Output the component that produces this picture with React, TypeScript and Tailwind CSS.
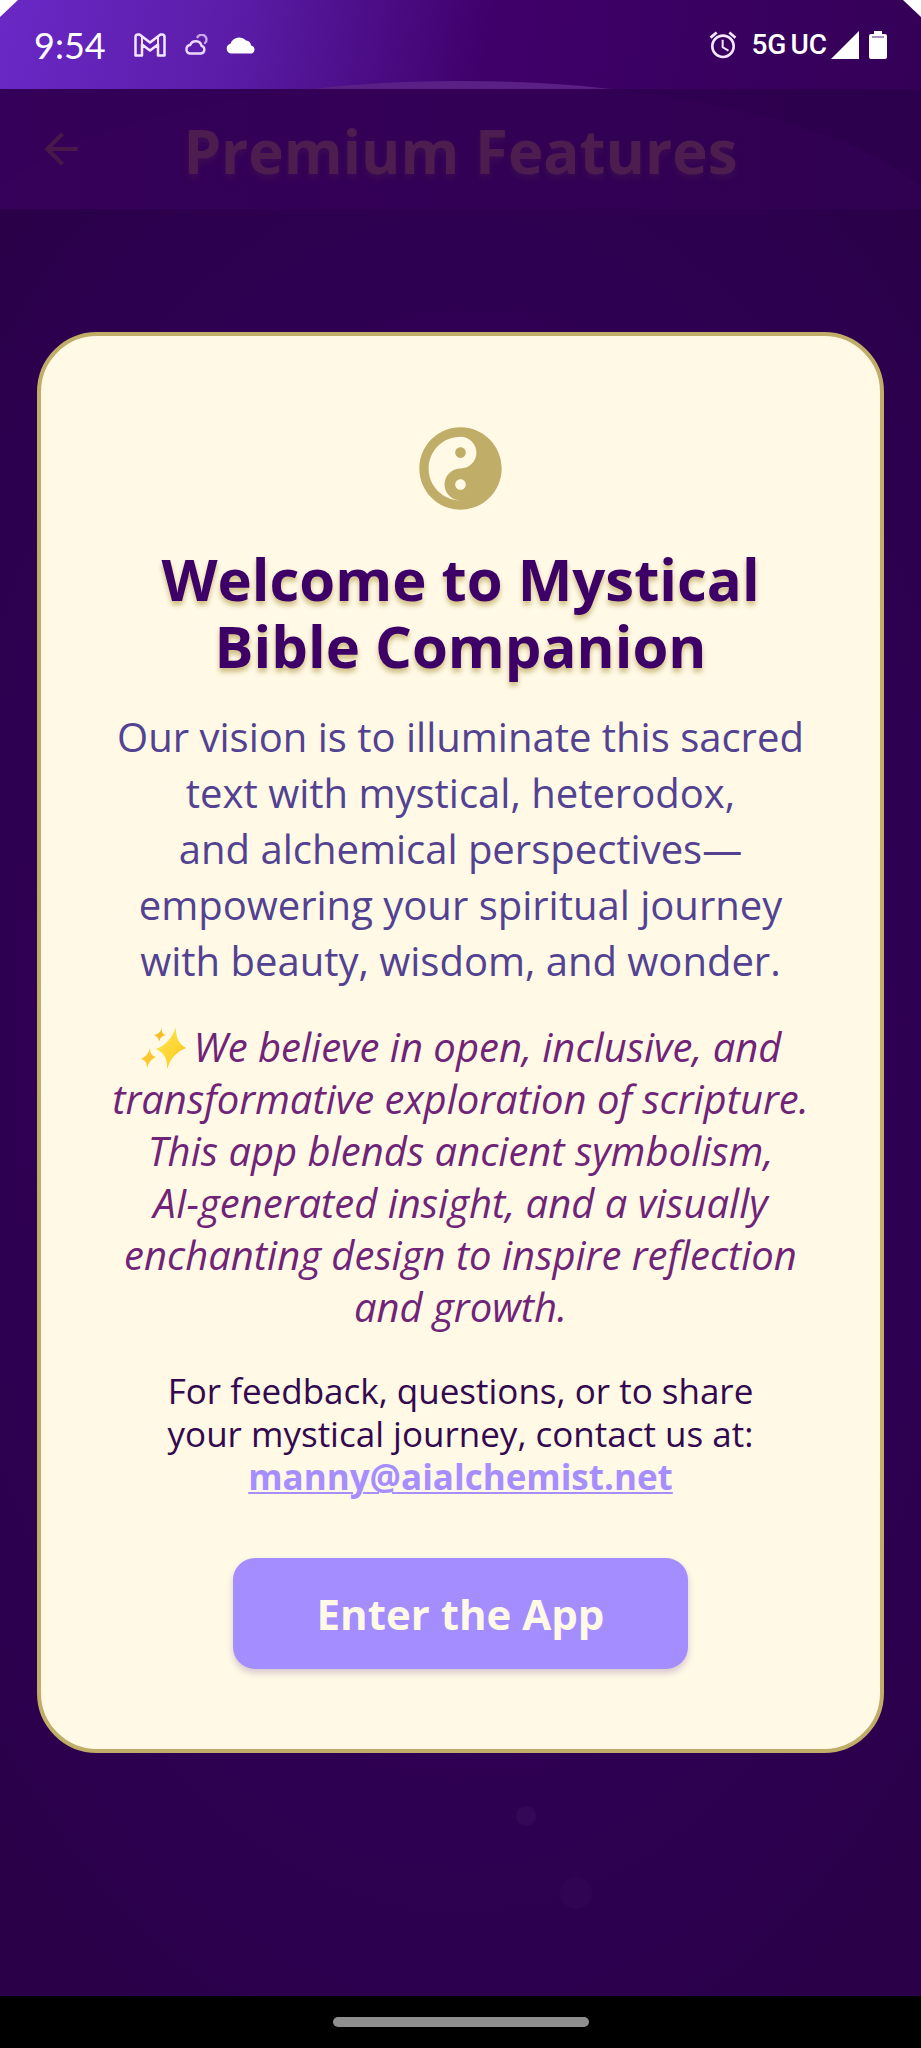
import { FaYinYang } from "react-icons/fa";
import { MdAlarm, MdArrowBack } from "react-icons/md";

function GmailIcon() {
  return (
    <svg viewBox="0 0 32 24" className="h-6 w-8" fill="none" stroke="#f3e6ff" strokeWidth="2.500" strokeLinejoin="round" aria-hidden="true">
      <path d="M1.500 4Q1.500 1.500 4 1.500H5.500L16 9.500L26.500 1.500H28Q30.500 1.500 30.500 4V22.500H24V11.500L16 17.500L8 11.500V22.500H1.500Z" />
      <path d="M8 4V11.500M24 4V11.500" strokeWidth="2" />
    </svg>
  );
}

function WeatherIcon() {
  return (
    <svg viewBox="0 0 24 22" className="h-[22px] w-6" fill="none" stroke="#ecd9fb" strokeWidth="2.400" strokeLinecap="round" aria-hidden="true">
      <path d="M6 19.500H17A3.900 3.900 0 0 0 17.600 11.900A6 6 0 0 0 6.200 11A4.300 4.300 0 0 0 6 19.500Z" />
      <path d="M13.500 3.200A4.800 4.800 0 1 1 21 9" stroke="#c9a5ea" />
    </svg>
  );
}

function CloudIcon() {
  return (
    <svg viewBox="0 0 30 18" className="h-[18px] w-[30px]" fill="currentColor" aria-hidden="true">
      <path d="M5 17.500A5 5 0 0 1 4.500 7.700A9.200 9.200 0 0 1 20 4.500A5.500 5.500 0 0 1 25 9.500A4.200 4.200 0 0 1 26 17.500Z" />
    </svg>
  );
}

function SparklesIcon() {
  return (
    <svg viewBox="0 0 46 44" className="mr-2 inline-block h-11 w-[46px] align-[-8px]" role="img" aria-label="Sparkles">
      <defs>
        <linearGradient id="spark" x1="0" y1="0" x2="1" y2="1">
          <stop offset="0" stopColor="#ffe45c" />
          <stop offset="0.600" stopColor="#fdd530" />
          <stop offset="1" stopColor="#f5b21b" />
        </linearGradient>
      </defs>
      <path fill="url(#spark)" d="M36 1Q35 16 46 22Q32 27 27 43Q28 28 16 23Q30 18 36 1Z" />
      <path fill="#f7bd25" d="M22 2Q21 8 26 9Q20 10 19 16Q19 11 14 9Q20 8 22 2Z" />
      <path fill="#fbc92f" d="M10 22Q10 30 16 31Q9 34 7 42Q7 34 1 33Q8 30 10 22Z" />
    </svg>
  );
}

function StatusBar() {
  return (
    <header className="relative flex h-[89px] items-center justify-between overflow-hidden bg-[linear-gradient(100deg,#6a28c6_0%,#5b1da8_25%,#3f006a_53%,#340057_100%)] pr-[34px] pl-[34px]">
      <div className="absolute top-[81px] left-1/2 h-[348px] w-[1000px] -translate-x-1/2 rounded-[50%] bg-[#5a2086]" />
      <svg viewBox="0 0 18 18" className="absolute top-0 left-0 size-[18px]" aria-hidden="true">
        <path d="M0 0H18L0 17Z" fill="#fff" />
      </svg>
      <svg viewBox="0 0 18 18" className="absolute top-0 right-0 size-[18px]" aria-hidden="true">
        <path d="M0 0H18V17Z" fill="#fff" />
      </svg>
      <div className="flex items-center text-white">
        <time className="font-['Lato',sans-serif] text-4xl">9:54</time>
        <div className="ml-7 flex items-center gap-[18px]">
          <GmailIcon />
          <WeatherIcon />
          <CloudIcon />
        </div>
      </div>
      <div className="flex items-center text-white">
        <MdAlarm className="size-8 text-[#f3e6ff]" />
        <span className="ml-3 flex gap-1 font-['Roboto',sans-serif] text-[28px] font-medium">
          <span>5G</span>
          <span>UC</span>
        </span>
        <svg viewBox="0 0 28 28" className="ml-1 size-7" fill="currentColor" aria-hidden="true">
          <path d="M28 0V28H0Z" />
        </svg>
        <svg viewBox="0 0 18 28" className="ml-2.5 h-7 w-[18px]" fill="currentColor" aria-hidden="true">
          <path d="M5 0H13V3H16Q18 3 18 5V26Q18 28 16 28H2Q0 28 0 26V5Q0 3 2 3H5Z" />
          <path d="M3 6H15" stroke="#8d6ba8" strokeWidth="1.500" />
        </svg>
      </div>
    </header>
  );
}

function TitleBar() {
  return (
    <div className="relative col-start-1 row-start-1 flex h-[120px] items-center self-start overflow-hidden bg-linear-to-r from-[#340059] to-[#2c004c]">
      <div className="absolute -top-2 left-1/2 h-[348px] w-[1000px] -translate-x-1/2 rounded-[50%] bg-linear-to-r from-[#35015a] to-[#300051]" />
      <button type="button" aria-label="Back" className="relative ml-9 text-[#471848]">
        <MdArrowBack className="size-[50px]" />
      </button>
      <h1 className="relative flex-1 pt-1 pr-[86px] text-center text-[60px] leading-[80px] font-bold text-[#4c1d4e] text-shadow-[0_4px_6px_rgb(76_29_78/0.4)]">
        Premium Features
      </h1>
    </div>
  );
}

function WelcomeDialog() {
  return (
    <section
      role="dialog"
      aria-labelledby="welcome-title"
      className="col-start-1 row-start-1 mx-[37px] flex flex-col items-center self-center justify-self-stretch rounded-[60px] border-4 border-[#c0ae68] bg-[#fff9e6] px-6 pt-[90px] pb-20 text-center"
    >
      <FaYinYang className="size-[85px] text-[#c0ae68]" />
      <h2
        id="welcome-title"
        className="mt-[34px] text-[58px] leading-[67px] font-bold text-[#3d0066] text-shadow-[0_4px_5px_rgb(192_174_104/0.8)]"
      >
        Welcome to Mystical
        <br />
        Bible Companion
      </h2>
      <p className="mt-[30px] text-[40px] leading-14 text-[#524291]">
        Our vision is to illuminate this sacred
        <br />
        text with mystical, heterodox,
        <br />
        and alchemical perspectives—
        <br />
        empowering your spiritual journey
        <br />
        with beauty, wisdom, and wonder.
      </p>
      <p className="mt-8 text-[40px] leading-[52px] text-[#702478] italic">
        <SparklesIcon />
        We believe in open, inclusive, and
        <br />
        transformative exploration of scripture.
        <br />
        This app blends ancient symbolism,
        <br />
        AI-generated insight, and a visually
        <br />
        enchanting design to inspire reflection
        <br />
        and growth.
      </p>
      <p className="mt-9 text-[35px] leading-[43px] text-[#33084f]">
        For feedback, questions, or to share
        <br />
        your mystical journey, contact us at:
        <br />
        <a href="mailto:manny@aialchemist.net" className="font-bold text-[#a68eff] underline decoration-2 underline-offset-2">
          manny@aialchemist.net
        </a>
      </p>
      <button
        type="button"
        className="mt-[60px] rounded-[22px] bg-[#a48dff] px-[84px] py-7 text-[42px] leading-[55px] font-bold text-[#fff9e6] shadow-[0_4px_7px_rgb(61_0_102/0.2)]"
      >
        Enter the App
      </button>
    </section>
  );
}

export default function App() {
  return (
    <div className="flex min-h-screen flex-col bg-black font-['Open_Sans',sans-serif]">
      <StatusBar />
      <main className="relative grid flex-1 bg-[radial-gradient(ellipse_75%_60%_at_50%_50%,#350060_0%,#2d0050_75%,#2a0048_100%)]">
        <div className="absolute top-[1717px] left-[516px] size-5 rounded-full bg-[#340857]" />
        <div className="absolute top-[1788px] left-[560px] size-8 rounded-full bg-[#310453]" />
        <TitleBar />
        <WelcomeDialog />
      </main>
      <footer className="flex h-[52px] items-center justify-center bg-black">
        <div className="h-2.5 w-64 rounded-full bg-[#8f8f8f]" />
      </footer>
    </div>
  );
}
